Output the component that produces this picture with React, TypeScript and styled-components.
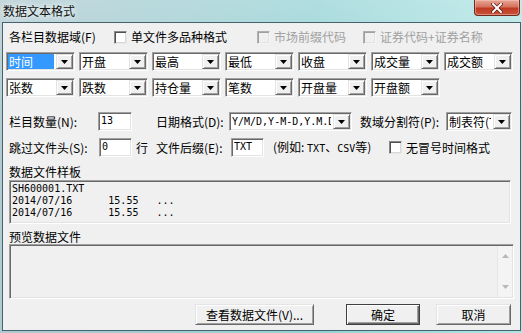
import React from 'react';
import styled, { createGlobalStyle, css } from 'styled-components';

const cjk = `"Noto Sans CJK SC", "Noto Sans", sans-serif`;
const mono = `"DejaVu Sans Mono", "Noto Sans CJK SC", monospace`;

const Global = createGlobalStyle`
  html, body { margin: 0; padding: 0; }
  body { width: 522px; height: 333px; overflow: hidden; background: #9fd3d6; }
`;

const Frame = styled.div`
  width: 522px;
  height: 333px;
  box-sizing: border-box;
  display: flex;
  flex-direction: column;
  padding: 0 1px 2px 2px;
  background:
    linear-gradient(180deg, rgba(255,255,255,0.25) 0%, rgba(255,255,255,0) 40%),
    linear-gradient(90deg, #b1c9d0 0%, #a2cdd2 30%, #96d2d5 60%, #a6dedf 85%, #b4e3e3 100%);
  font-family: ${cjk};
  font-size: 12px;
  color: #000;
`;

const TitleBar = styled.div`
  height: 22px;
  flex: none;
  display: flex;
  align-items: flex-start;
  justify-content: space-between;
`;

const Title = styled.div`
  padding: 3px 0 0 1px;
  line-height: 15px;
  font-size: 12px;
  color: #111;
  text-shadow: 0 0 5px rgba(255, 255, 255, 0.9), 0 0 8px rgba(255, 255, 255, 0.7);
`;

const CloseButton = styled.div`
  width: 46px;
  height: 16px;
  margin-right: 1px;
  box-sizing: border-box;
  border: 1px solid #6e2a20;
  border-top: none;
  border-radius: 0 0 4px 4px;
  background: linear-gradient(180deg, #e7a796 0%, #d4725c 45%, #bf3a22 55%, #c9533a 100%);
  box-shadow: inset 0 0 0 1px rgba(255, 210, 200, 0.45);
  display: flex;
  align-items: center;
  justify-content: center;
`;

const Client = styled.div`
  flex: 1;
  background: #f0f0f0;
  border: 1px solid #44636c;
  display: flex;
  flex-direction: column;
  min-height: 0;
`;

const Row = styled.div<{ $mt: number; $pl?: number; $h?: number }>`
  display: flex;
  align-items: center;
  margin-top: ${(p) => p.$mt}px;
  padding-left: ${(p) => p.$pl ?? 6}px;
  height: ${(p) => p.$h ?? 19}px;
  flex: none;
`;

const ComboRow = styled(Row)`
  gap: 4px;
`;

const Label = styled.span<{ $w?: number; $ml?: number; $disabled?: boolean }>`
  display: inline-block;
  flex: none;
  white-space: nowrap;
  line-height: 14px;
  ${(p) => (p.$w ? `width: ${p.$w}px;` : '')}
  margin-left: ${(p) => p.$ml ?? 0}px;
  color: ${(p) => (p.$disabled ? '#a0a0a0' : '#000')};
`;

const Mono = styled.span`
  font-family: ${mono};
  font-size: 10px;
`;

const CheckItem = styled.div<{ $w?: number }>`
  display: flex;
  align-items: center;
  gap: 4px;
  flex: none;
  ${(p) => (p.$w ? `width: ${p.$w}px;` : '')}
`;

const CheckBox = styled.span<{ $disabled?: boolean }>`
  display: inline-block;
  width: 13px;
  height: 13px;
  box-sizing: border-box;
  border: 1px solid;
  border-color: #8a8a8a #e8e8e8 #e8e8e8 #8a8a8a;
  box-shadow: inset 1px 1px #505050, inset -1px -1px #d8d8d8;
  background: ${(p) => (p.$disabled ? '#f0f0f0' : '#fff')};
  ${(p) =>
    p.$disabled &&
    css`
      border-color: #b0b0b0 #f4f4f4 #f4f4f4 #b0b0b0;
      box-shadow: inset 1px 1px #a0a0a0, inset -1px -1px #e3e3e3;
    `}
`;

const sunken = css`
  box-sizing: border-box;
  border: 1px solid;
  border-color: #a0a0a0 #ffffff #ffffff #a0a0a0;
  box-shadow: inset 1px 1px #696969, inset -1px -1px #e3e3e3;
`;

const raised = css`
  box-sizing: border-box;
  border: 1px solid;
  border-color: #e3e3e3 #696969 #696969 #e3e3e3;
  box-shadow: inset 1px 1px #ffffff, inset -1px -1px #a0a0a0;
  background: #f0f0f0;
`;

const ComboBox = styled.div<{ $w: number }>`
  ${sunken}
  width: ${(p) => p.$w}px;
  height: 19px;
  flex: none;
  background: #fff;
  display: flex;
  padding: 1px;
`;

const ComboField = styled.div`
  flex: 1;
  min-width: 0;
  overflow: hidden;
  display: flex;
  padding-right: 2px;
`;

const ComboText = styled.span<{ $selected?: boolean; $mono?: boolean }>`
  flex: 1;
  white-space: nowrap;
  overflow: hidden;
  height: 15px;
  line-height: 15px;
  padding-left: 1px;
  font-family: ${(p) => (p.$mono ? mono : cjk)};
  font-size: ${(p) => (p.$mono ? '10px' : '12px')};
  background: ${(p) => (p.$selected ? '#3399ff' : 'transparent')};
  color: ${(p) => (p.$selected ? '#fff' : '#000')};
`;

const DropButton = styled.div`
  ${raised}
  width: 17px;
  flex: none;
  display: flex;
  align-items: center;
  justify-content: center;
`;

const TextInput = styled.div<{ $w: number }>`
  ${sunken}
  width: ${(p) => p.$w}px;
  height: 19px;
  flex: none;
  background: #fff;
  padding: 1px 2px;
  font-family: ${mono};
  font-size: 10px;
  line-height: 14px;
`;

const SectionLabel = styled.div<{ $mt: number }>`
  margin-top: ${(p) => p.$mt}px;
  padding-left: 6px;
  line-height: 14px;
  height: 14px;
  flex: none;
`;

const SampleBox = styled.div`
  ${sunken}
  margin: 1px 9px 0 6px;
  height: 44px;
  flex: none;
  padding: 2px 2px;
  font-family: ${mono};
  font-size: 10px;
  line-height: 12px;
  white-space: pre;
  overflow: hidden;
`;

const PreviewBox = styled.div`
  ${sunken}
  margin: 0 6px 0 6px;
  height: 55px;
  flex: none;
  padding: 1px;
  display: flex;
  justify-content: flex-end;
`;

const ScrollBar = styled.div`
  width: 15px;
  background: #f4f4f4;
  border-left: 1px solid #e6e6e6;
  display: flex;
  flex-direction: column;
  justify-content: space-between;
  align-items: center;
  padding: 8px 0 8px;
  box-sizing: border-box;
`;

const ButtonRow = styled.div`
  display: flex;
  justify-content: flex-end;
  margin-top: 5px;
  padding-right: 9px;
  flex: none;
`;

const PushButton = styled.div<{ $w: number; $ml: number; $default?: boolean }>`
  ${raised}
  width: ${(p) => p.$w}px;
  height: 21px;
  margin-left: ${(p) => p.$ml}px;
  display: flex;
  align-items: center;
  justify-content: center;
  line-height: 14px;
  ${(p) =>
    p.$default &&
    css`
      border-color: #404040;
      box-shadow: inset 1px 1px #ffffff, inset -1px -1px #696969, inset -2px -2px #a0a0a0;
    `}
`;

const Arrow = ({ color = '#000' }: { color?: string }) => (
  <svg width="7" height="4" viewBox="0 0 7 4">
    <polygon points="0,0 7,0 3.5,4" fill={color} />
  </svg>
);

const UpArrow = () => (
  <svg width="7" height="4" viewBox="0 0 7 4">
    <polygon points="0,4 7,4 3.5,0" fill="#b8b8b8" />
  </svg>
);

const Combo = ({
  value,
  w = 69,
  selected,
  mono: isMono,
}: {
  value: string;
  w?: number;
  selected?: boolean;
  mono?: boolean;
}) => (
  <ComboBox $w={w}>
    <ComboField>
      <ComboText $selected={selected} $mono={isMono}>
        {value}
      </ComboText>
    </ComboField>
    <DropButton>
      <Arrow />
    </DropButton>
  </ComboBox>
);

const row2 = ['时间', '开盘', '最高', '最低', '收盘', '成交量', '成交额'];
const row3 = ['张数', '跌数', '持仓量', '笔数', '开盘量', '开盘额'];

const sample = ['SH600001.TXT', '2014/07/16      15.55   ...', '2014/07/16      15.55   ...'].join('\n');

export default function App() {
  return (
    <>
      <Global />
      <Frame>
        <TitleBar>
          <Title>数据文本格式</Title>
          <CloseButton>
            <svg width="12" height="10" viewBox="0 0 12 10">
              <path d="M2 1 L10 9 M10 1 L2 9" stroke="#5a1a10" strokeWidth="3.4" strokeLinecap="square" />
              <path d="M2 1 L10 9 M10 1 L2 9" stroke="#ffffff" strokeWidth="2" strokeLinecap="square" />
            </svg>
          </CloseButton>
        </TitleBar>
        <Client>
          <Row $mt={7} $h={14}>
            <Label $w={105}>各栏目数据域(F)</Label>
            <CheckItem $w={143}>
              <CheckBox />
              <Label>单文件多品种格式</Label>
            </CheckItem>
            <CheckItem $w={106}>
              <CheckBox $disabled />
              <Label $disabled>市场前缀代码</Label>
            </CheckItem>
            <CheckItem>
              <CheckBox $disabled />
              <Label $disabled>证券代码+证券名称</Label>
            </CheckItem>
          </Row>
          <ComboRow $mt={8} $pl={3}>
            {row2.map((v, i) => (
              <Combo key={v} value={v} selected={i === 0} />
            ))}
          </ComboRow>
          <ComboRow $mt={7} $pl={3}>
            {row3.map((v) => (
              <Combo key={v} value={v} />
            ))}
          </ComboRow>
          <Row $mt={15}>
            <Label $w={89}>栏目数量(N):</Label>
            <TextInput $w={34}>13</TextInput>
            <Label $w={73} $ml={24}>日期格式(D):</Label>
            <Combo value="Y/M/D,Y-M-D,Y.M.D" w={123} mono />
            <Label $w={86} $ml={8}>数域分割符(P):</Label>
            <Combo value="制表符(Tab)" w={66} />
          </Row>
          <Row $mt={7}>
            <Label $w={90}>跳过文件头(S):</Label>
            <TextInput $w={33}>0</TextInput>
            <Label $w={20} $ml={4}>行</Label>
            <Label $w={75}>文件后缀(E):</Label>
            <TextInput $w={33}>TXT</TextInput>
            <Label $w={116} $ml={9}>
              (例如: <Mono>TXT</Mono>、<Mono>CSV</Mono>等)
            </Label>
            <CheckItem>
              <CheckBox />
              <Label>无冒号时间格式</Label>
            </CheckItem>
          </Row>
          <SectionLabel $mt={8}>数据文件样板</SectionLabel>
          <SampleBox>{sample}</SampleBox>
          <SectionLabel $mt={6}>预览数据文件</SectionLabel>
          <PreviewBox>
            <ScrollBar>
              <UpArrow />
              <Arrow color="#b8b8b8" />
            </ScrollBar>
          </PreviewBox>
          <ButtonRow>
            <PushButton $w={119} $ml={0}>
              查看数据文件(V)...
            </PushButton>
            <PushButton $w={74} $ml={32} $default>
              确定
            </PushButton>
            <PushButton $w={75} $ml={16}>
              取消
            </PushButton>
          </ButtonRow>
        </Client>
      </Frame>
    </>
  );
}
